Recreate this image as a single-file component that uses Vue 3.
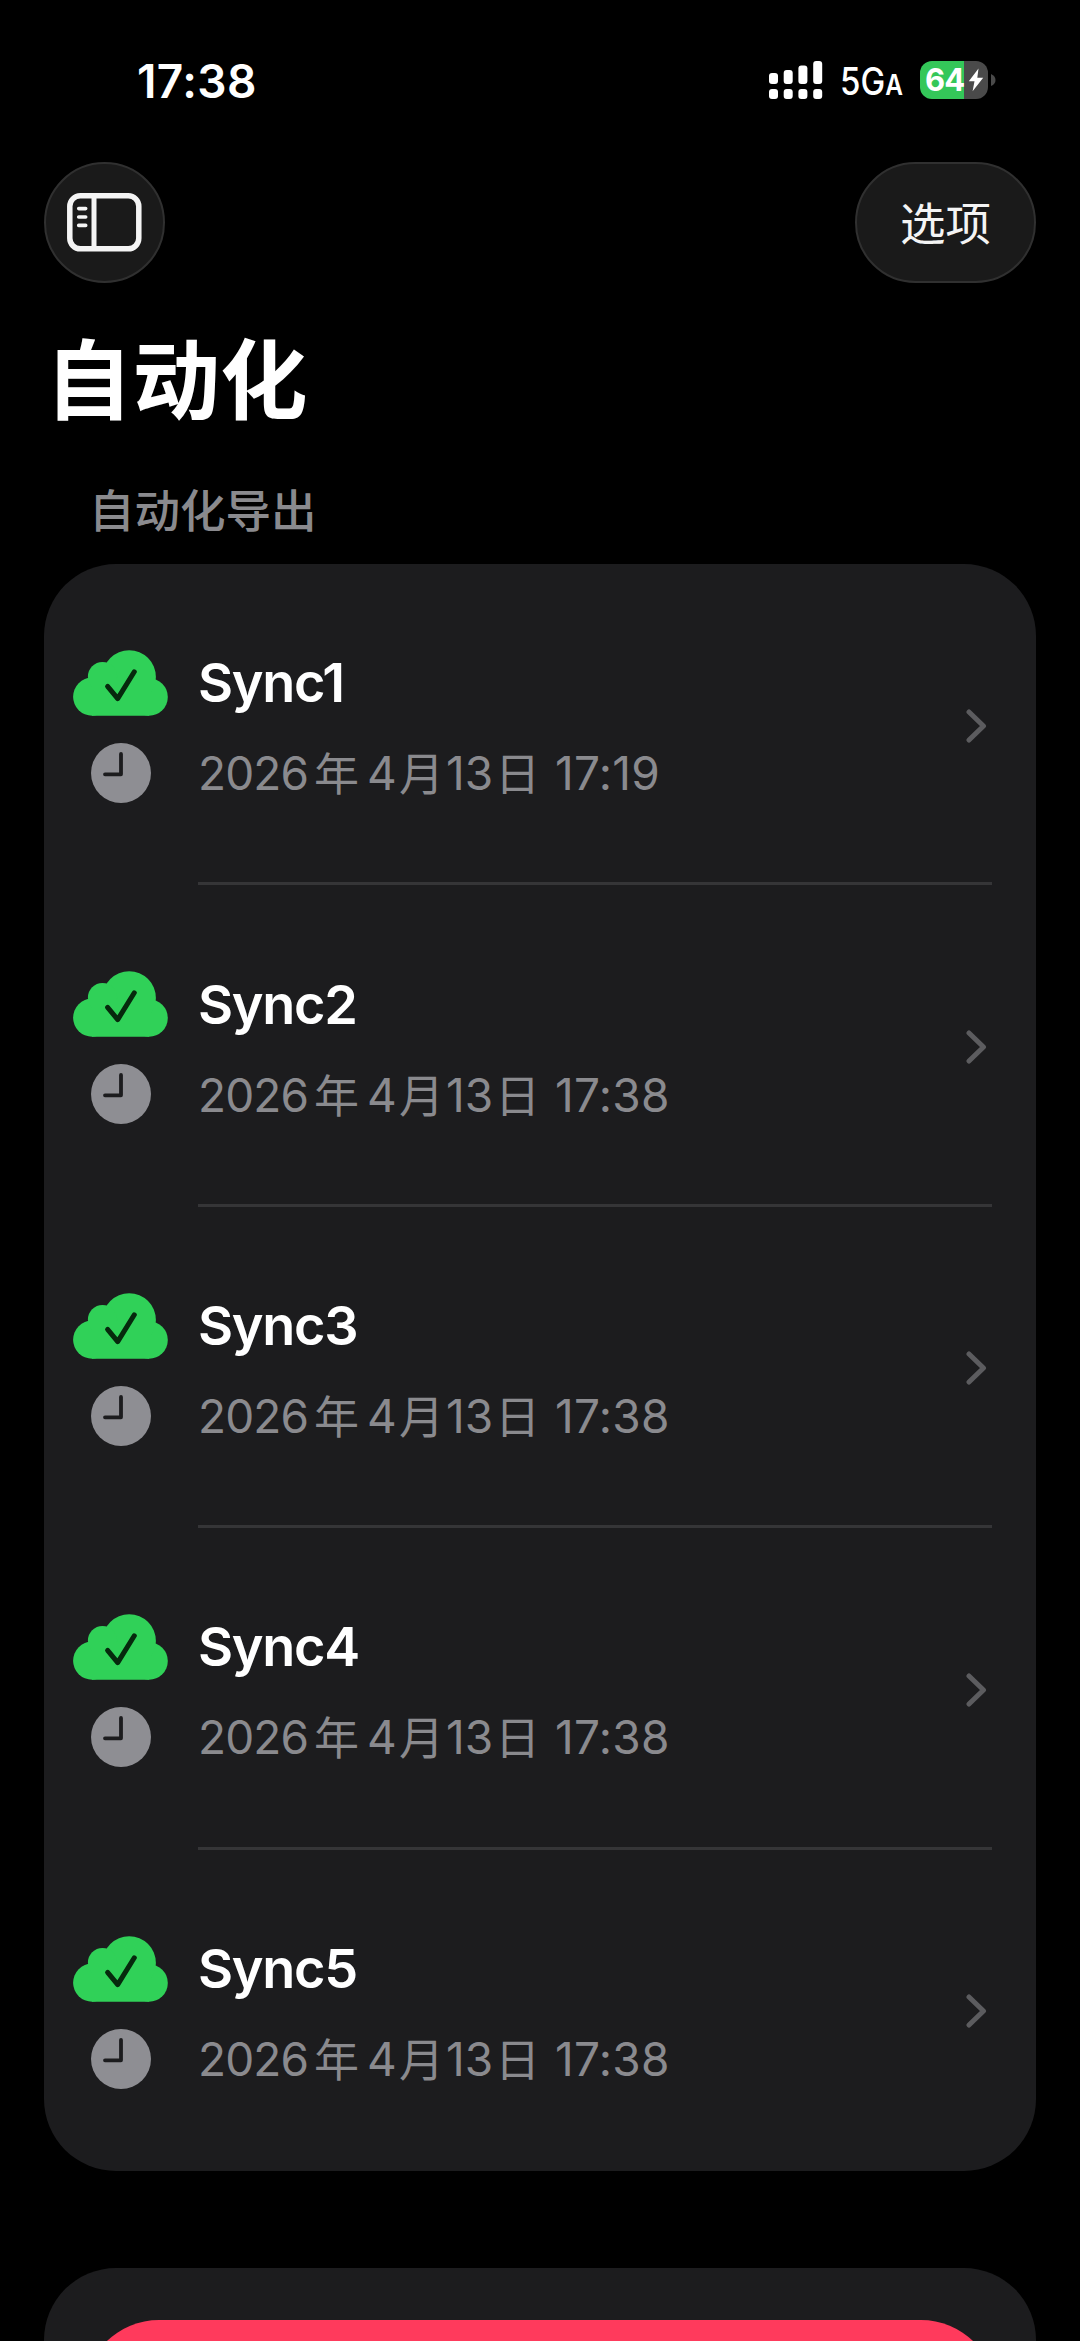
<script setup>
const items = [
  { name: 'Sync1', time: '17:19' },
  { name: 'Sync2', time: '17:38' },
  { name: 'Sync3', time: '17:38' },
  { name: 'Sync4', time: '17:38' },
  { name: 'Sync5', time: '17:38' },
]
</script>

<template>
  <div class="screen">
    <header class="status">
      <span class="clock">17:38</span>
      <div class="indicators">
        <svg class="signal" width="54" height="38" viewBox="0 0 54 38" fill="#fff">
          <rect x="0" y="12" width="9" height="11" rx="3" />
          <rect x="14.7" y="9" width="9" height="14" rx="3" />
          <rect x="29.4" y="4.5" width="9" height="18.5" rx="3" />
          <rect x="44.2" y="0" width="9" height="23" rx="3" />
          <rect x="0" y="28" width="9" height="10" rx="3" />
          <rect x="14.7" y="28" width="9" height="10" rx="3" />
          <rect x="29.4" y="28" width="9" height="10" rx="3" />
          <rect x="44.2" y="28" width="9" height="10" rx="3" />
        </svg>
        <span class="network">5G<small>A</small></span>
        <div class="battery">
          <span class="level">64</span>
          <svg class="bolt" width="16" height="24" viewBox="0 0 16 24">
            <path d="M10.5 .5 .8 13.2h5.7L4.6 23.2 15.2 9.8H9.3Z" fill="#fff" />
          </svg>
        </div>
        <svg class="nub" width="5" height="12" viewBox="0 0 5 12">
          <path d="M0 0Q4.5 2 4.5 6T0 12Z" fill="#4a4a4a" />
        </svg>
      </div>
    </header>

    <nav class="toolbar">
      <button class="round">
        <svg width="75" height="59" viewBox="0 0 75 59" fill="none" stroke="#f4f4f4" stroke-linecap="round">
          <rect x="2.8" y="2.8" width="69" height="53" rx="10.5" stroke-width="5.5" />
          <path d="M27 3v53" stroke-width="5" stroke-linecap="butt" />
          <path d="M11.7 15.6h7M11.7 24h7M11.7 32.4h7" stroke-width="3.6" />
        </svg>
      </button>
      <button class="pill">选项</button>
    </nav>

    <h1>自动化</h1>
    <h2>自动化导出</h2>

    <main class="card">
      <article v-for="item in items" :key="item.name" class="row">
        <div class="icons">
          <svg width="96" height="67" viewBox="0 0 96 67">
            <g fill="#30d158">
              <circle cx="19.2" cy="46.7" r="19.1" />
              <circle cx="76" cy="47" r="18.8" />
              <circle cx="56.2" cy="27" r="26.7" />
              <circle cx="29.5" cy="26.5" r="14.6" />
              <path d="M19 30H76V65.8H19Z" />
            </g>
            <path d="M34.6 36.4 44.7 48.6 61.3 21.8" fill="none" stroke="#06290d" stroke-width="5" stroke-linecap="round" stroke-linejoin="round" />
          </svg>
          <svg width="60" height="60" viewBox="0 0 60 60">
            <circle cx="30" cy="30" r="30" fill="#8e8e93" />
            <path d="M30 11v20.3H14" fill="none" stroke="#1c1c1e" stroke-width="3.8" stroke-linecap="round" stroke-linejoin="round" />
          </svg>
        </div>
        <div class="body">
          <div class="texts">
            <div class="name">{{ item.name }}</div>
            <div class="date">
              <span class="year">2026</span><span class="han nian">年</span><span class="month">4</span><span class="han yue">月</span><span class="day">13</span><span class="han ri">日</span><span class="time">{{ item.time }}</span>
            </div>
          </div>
          <svg class="chevron" width="21" height="34" viewBox="0 0 21 34">
            <path d="M3 3 17.5 17 3 31" fill="none" stroke="#5c5c5f" stroke-width="5" stroke-linecap="round" stroke-linejoin="round" />
          </svg>
        </div>
      </article>
    </main>

    <section class="card next">
      <div class="action"></div>
    </section>
  </div>
</template>

<style>
body {
  background: #000;
}
</style>

<style scoped>
.screen {
  box-sizing: border-box;
  width: 1080px;
  height: 2341px;
  overflow: hidden;
  display: flex;
  flex-direction: column;
  padding: 0 44px;
  background: #000;
  color: #fff;
  font-family: Inter, "Noto Sans CJK SC", sans-serif;
}

.status {
  height: 162px;
  flex: none;
  display: flex;
  justify-content: space-between;
  padding: 0 40px 0 93px;
}

.clock {
  margin-top: 53px;
  font-size: 46px;
  line-height: 56px;
  font-weight: 600;
  letter-spacing: 0.4px;
}

.indicators {
  display: flex;
  align-items: center;
  height: 38px;
  margin-top: 61px;
}

.network {
  width: 62px;
  margin: 5px 0 0 17px;
  font-size: 38px;
  line-height: 40px;
  font-weight: 500;
  white-space: nowrap;
  transform: scaleX(0.87);
  transform-origin: 0 50%;
}

.network small {
  font-size: 28px;
  font-weight: 600;
}

.battery {
  box-sizing: border-box;
  width: 68px;
  height: 38px;
  margin-left: 18px;
  padding-left: 5px;
  display: flex;
  align-items: center;
  border-radius: 12px;
  background: linear-gradient(90deg, #34c759 0 43.5px, #4a4a4a 43.5px);
}

.level {
  width: 43px;
  font-size: 31px;
  line-height: 38px;
  font-weight: 700;
  letter-spacing: -0.8px;
}

.nub {
  margin-left: 3px;
}

.toolbar {
  display: flex;
  justify-content: space-between;
  height: 121px;
  flex: none;
}

button {
  box-sizing: border-box;
  height: 121px;
  padding: 0;
  display: flex;
  align-items: center;
  justify-content: center;
  border: 2px solid #303030;
  border-radius: 61px;
  background: #1a1a1a;
  color: #f4f4f4;
  font: 400 45.5px/60px "Noto Sans CJK SC", sans-serif;
}

.round {
  width: 121px;
}

.pill {
  width: 181px;
  padding-bottom: 4px;
}

h1 {
  margin: 29px 0 0 1px;
  font: 700 87.5px/126px "Noto Sans CJK SC", sans-serif;
}

h2 {
  margin: 37px 0 22px 45px;
  color: #8a8a8e;
  font: 500 45.5px/67px "Noto Sans CJK SC", sans-serif;
}

.card {
  flex: none;
  border-radius: 72px;
  background: #1c1c1e;
}

.row {
  height: 321.4px;
  display: flex;
}

.icons {
  width: 96px;
  margin: 86px 29px 0 29px;
  display: flex;
  flex-direction: column;
  align-items: center;
  gap: 26px;
}

.icons svg {
  flex: none;
}

.body {
  box-sizing: border-box;
  width: 794px;
  display: flex;
  align-items: center;
  justify-content: space-between;
  padding: 5px 5px 0 0;
  border-bottom: 3px solid #353537;
}

.row:last-child .body {
  border-bottom-color: transparent;
}

.name {
  margin-top: 5px;
  font-size: 54px;
  line-height: 70px;
  font-weight: 600;
  letter-spacing: -1.3px;
}

.date {
  display: flex;
  margin-top: 20px;
  color: #8a8a8e;
  font-size: 46px;
  line-height: 70px;
  white-space: nowrap;
}

.date span {
  flex: none;
}

.date .han {
  font-family: "Noto Sans CJK SC", sans-serif;
  font-size: 45px;
  line-height: 67px;
}

.year {
  width: 116px;
  letter-spacing: -0.9px;
}

.nian {
  width: 53px;
}

.month {
  width: 32px;
}

.yue {
  width: 47px;
}

.day {
  width: 49px;
}

.ri {
  width: 60px;
}

.time {
  letter-spacing: 0.3px;
}

.next {
  height: 300px;
  margin-top: 97px;
  padding: 52px 40px 0;
}

.action {
  height: 150px;
  border-radius: 75px;
  background: #ff3a5c;
}
</style>
